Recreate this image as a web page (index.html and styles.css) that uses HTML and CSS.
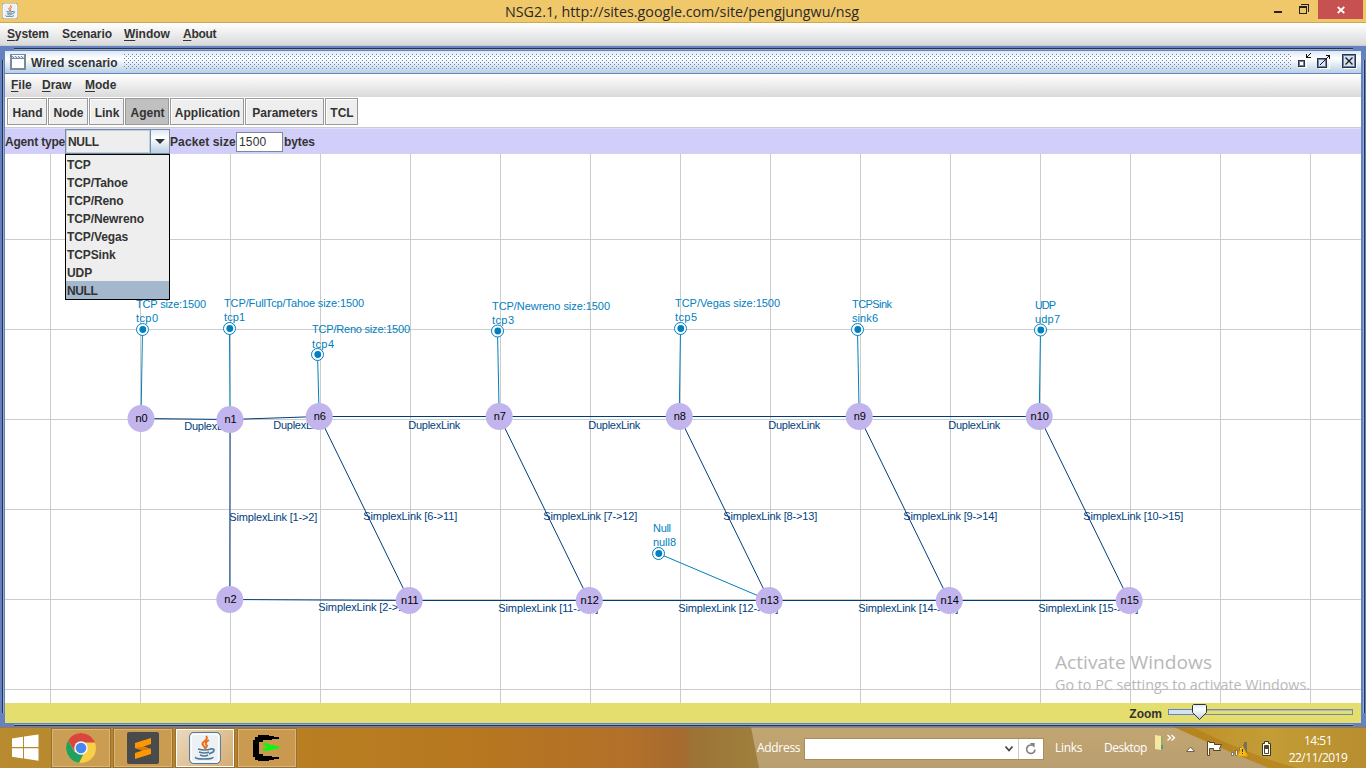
FILE: index.html
```html
<!DOCTYPE html>
<html lang="en">
<head>
<meta charset="utf-8">
<title>NSG2.1</title>
<link rel="stylesheet" href="styles.css">
</head>
<body>
<header class="titlebar">
  <svg class="app-icon" width="16" height="16" viewBox="0 0 32 32"><use href="#java"/></svg>
  <svg class="title-text" width="376" height="22"><text x="11" y="17" textLength="354" lengthAdjust="spacingAndGlyphs">NSG2.1, http://sites.google.com/site/pengjungwu/nsg</text></svg>
  <div class="window-controls">
    <svg width="48" height="19" viewBox="1270 0 48 19" shape-rendering="crispEdges"><path d="M1274 11h8v2h-8z" fill="#222"/><path d="M1299.5 7.500h7v6h-7zM1299 6.500h8M1301 4.500h7.500v7" fill="none" stroke="#222"/></svg>
    <div class="close"><svg width="8" height="8" viewBox="0 0 8 8"><path d="M.7 1l6.600 6M7.300 1L.7 7" stroke="#fff" stroke-width="1.700"/></svg></div>
  </div>
</header>
<nav class="menubar main-menu">
  <span class="m-system"><u>S</u>ystem</span><span class="m-scenario">S<u>c</u>enario</span><span class="m-window"><u>W</u>indow</span><span><u>A</u>bout</span>
</nav>
<main class="desktop">
  <section class="frame">
    <div class="frame-title">
      <svg width="16" height="16" viewBox="0 0 16 16" shape-rendering="crispEdges"><rect x=".5" y=".5" width="15" height="15" rx="1" fill="#fff" stroke="#7a8a99"/><rect x="1.500" y="1.500" width="13" height="3" fill="#dce7f3"/><path d="M2 2.500h12M3 3.500h12" stroke="#6382bf" stroke-dasharray="1 2"/><path d="M1 4.500h14M1.500 1v14M14.500 1v14M1 14.500h14" stroke="#7a8a99"/></svg>
      <span class="frame-name">Wired scenario</span>
      <svg class="grip" width="1168" height="16" shape-rendering="crispEdges"><defs><pattern id="dots" width="4" height="4" patternUnits="userSpaceOnUse"><path d="M0 0h1v1H0zM2 2h1v1H2z" fill="#6382bf"/></pattern></defs><rect width="1168" height="16" fill="url(#dots)"/></svg>
      <svg class="frame-buttons" width="60" height="18" viewBox="1297 53 60 18" shape-rendering="crispEdges">
        <path d="M1299 67.500h7v-7M1319 68.500h10v-10M1344 68.500h12.500v-14" fill="none" stroke="#fff"/>
        <rect x="1298.500" y="60.500" width="6" height="6" fill="#b8cfe5" stroke="#333"/><rect x="1299.500" y="61.500" width="4" height="4" fill="#fff" stroke="#6382bf"/><path d="M1307 57.500h4M1306.500 54v4M1307 57l4-4" stroke="#111" fill="none"/>
        <rect x="1317.500" y="58.500" width="9" height="9" fill="#dce8f4" stroke="#333"/><rect x="1318.500" y="59.500" width="7" height="7" fill="none" stroke="#6382bf"/><path d="M1320 65l9-9M1326 55.500h4M1329.500 55v4" stroke="#111"/>
        <rect x="1342.500" y="54.500" width="13" height="13" fill="#d5e3f1" stroke="#333"/><rect x="1343.500" y="55.500" width="11" height="11" fill="none" stroke="#6382bf"/><path d="M1345.500 57.500l7 7M1352.500 57.500l-7 7" stroke="#222" stroke-width="1.400" shape-rendering="auto"/>
      </svg>
    </div>
    <nav class="menubar frame-menu"><span class="m-file"><u>F</u>ile</span><span class="m-draw"><u>D</u>raw</span><span><u>M</u>ode</span></nav>
    <div class="toolbar">
      <button class="w-hand">Hand</button><button class="w-node">Node</button><button class="w-link">Link</button><button class="w-agent active">Agent</button><button class="w-app">Application</button><button class="w-param">Parameters</button><button class="w-tcl">TCL</button>
    </div>
    <div class="options">
      <span class="agent-label">Agent type</span>
      <div class="combo"><span class="combo-value">NULL</span><span class="combo-arrow"><i></i></span>
        <ul class="popup"><li>TCP</li><li>TCP/Tahoe</li><li>TCP/Reno</li><li>TCP/Newreno</li><li>TCP/Vegas</li><li>TCPSink</li><li>UDP</li><li class="selected">NULL</li></ul>
      </div>
      <span class="packet-label">Packet size</span><span class="field">1500</span><span class="bytes">bytes</span>
    </div>
    <div class="canvas">
      <svg id="diagram" width="1356" height="549" viewBox="5 154 1356 549"></svg>
      <div class="watermark"><svg width="270" height="50" viewBox="1050 648 270 50"><text x="1055" y="669" font-size="19" textLength="157" lengthAdjust="spacingAndGlyphs">Activate Windows</text><text x="1055" y="690" font-size="14" textLength="255" lengthAdjust="spacingAndGlyphs">Go to PC settings to activate Windows.</text></svg></div>
    </div>
    <div class="zoombar"><span>Zoom</span>
      <svg width="187" height="18" viewBox="1167 703 187 18"><rect x="1168.500" y="709.500" width="184" height="5" fill="#e3de6d" stroke="#7a8a99"/><path d="M1169 710.500h183" stroke="#a3b8cc"/><rect x="1168.500" y="709.500" width="30" height="5" fill="#d4e3f1" stroke="#6382bf"/><path d="M1193.500 704.500h12l1 1v7l-7 7-7-7v-7z" fill="url(#thumb)" stroke="#333"/><defs><linearGradient id="thumb" x2="0" y2="1"><stop stop-color="#dce8f4"/><stop offset=".3" stop-color="#fff"/><stop offset="1" stop-color="#b8cfe5"/></linearGradient></defs></svg>
    </div>
  </section>
</main>
<footer class="taskbar">
  <svg class="wallpaper" width="1366" height="41" viewBox="0 0 1366 41" preserveAspectRatio="none"><defs><linearGradient id="wood"><stop stop-color="#b88b30"/><stop offset=".3" stop-color="#b98124"/><stop offset=".6" stop-color="#b7781f"/><stop offset=".83" stop-color="#b27029"/><stop offset=".9" stop-color="#a66b31"/><stop offset=".91" stop-color="#9c7335"/><stop offset="1" stop-color="#9f803d"/></linearGradient><linearGradient id="gold"><stop stop-color="#bd8f28"/><stop offset=".5" stop-color="#c49d36"/><stop offset="1" stop-color="#b78d2f"/></linearGradient><linearGradient id="tan" x2="0" y2="1"><stop stop-color="#c2a671"/><stop offset="1" stop-color="#b99e70"/></linearGradient></defs><rect width="760" height="41" fill="url(#wood)"/><path d="M751 0h430q75 34 95 41H759z" fill="url(#tan)"/><path d="M1174 0h192v41h-97q-55-23-95-41z" fill="url(#gold)"/><path d="M1174 0h18q60 29 105 41h-28q-50-20-95-41z" fill="#b27c18" opacity=".6"/><path d="M0 .5h1366" stroke="#866b3d" opacity=".5"/></svg>
  <svg class="start" width="52" height="40" viewBox="0 728 52 40"><path d="M12 738.500l11-1.800v10.300H12zM24 736.500l14.500-2v12.500H24zM12 748.200h11v10.300l-11-1.700zM24 748.200h14.500v12.500l-14.500-2.200z" fill="#fff"/></svg>
  <div class="task"><svg width="32" height="32" viewBox="0 0 32 32"><circle cx="16" cy="16" r="15" fill="#f9cf48"/><path d="M3 8.500A15 15 0 0 1 29 8.500L30 10.500H16L9.500 19z" fill="#da453c"/><path d="M3 8.500l6.600 11.200 8.500 3.100-4 8A15 15 0 0 1 3 8.500z" fill="#23a15c"/><circle cx="16" cy="16" r="6.800" fill="#f6f6f6"/><circle cx="16" cy="16" r="5.300" fill="#4688ef"/></svg></div>
  <div class="task"><svg width="32" height="32" viewBox="0 0 32 32"><rect width="32" height="32" rx="2" fill="#494a4b"/><path d="M8 11L24 6v6l-7.500 2.500L24 17v5L8 27v-6l7.500-2.500L8 16z" fill="#ff9800"/><path d="M8 16l8.500-1.500L24 17l-8.500 1.500z" fill="#d77d0a"/></svg></div>
  <div class="task current"><svg width="32" height="32" viewBox="0 0 32 32"><g id="java"><rect x=".7" y=".7" width="30.600" height="30.600" rx="4" fill="#edf1f4" stroke="#52799b" stroke-width="1.300"/><rect x="2" y="2" width="28" height="28" rx="3" fill="none" stroke="#fff" stroke-width="1.500"/><path d="M17 4c4 4-6 6-3 9l2 3M20 8c-5 3-3 4-2 6l-2 3" fill="none" stroke="#e86f19" stroke-width="2"/><path d="M9 17q7 2 13 0M10 20q6 2 10 0M11 23q5 2 8 0M21 17q6-1 3 3l-4 2M7 25q-2 2 8 2 9 0 9-2" fill="none" stroke="#4d7899" stroke-width="1.700"/></g></svg></div>
  <div class="task"><svg width="32" height="32" viewBox="0 0 32 32" shape-rendering="crispEdges"><path d="M7 3h11v1h5v1h5v2h-7v1h-9v2H8v12h4v2h9v1h7v2h-5v1h-5v1H7v-1H4v-3H2V8h2V5h3z" fill="#000"/><path d="M12 11h4v1h3v1h5v1h4v3h-6v1h-4v1h-6v-2h2v-1h2v-1h-2v-2h-2z" fill="#0cf810"/></svg></div>
  <span class="address-label">Address</span>
  <div class="address-box"><svg width="10" height="8" viewBox="0 0 10 8"><path d="M1.500 1.500L5 5.500l3.500-4" fill="none" stroke="#444" stroke-width="1.800"/></svg><span class="refresh"><svg width="12" height="12" viewBox="0 0 12 12"><path d="M7.200 2.300A4.200 4.200 0 1 0 10 6.500" fill="none" stroke="#808080" stroke-width="1.600"/><path d="M5 0h4.600v4.600L8 3.500z" fill="#808080"/></svg></span></div>
  <span class="links">Links</span><span class="desk">Desktop</span>
  <svg class="tray" width="125" height="40" viewBox="1150 728 125 40"><path d="M1155 735l6 1v14l-6-1z" fill="#f6e7a1"/><path d="M1161 736h2v14h-2z" fill="#a3a865"/><path d="M1161 745h2v4h-2z" fill="#469b94"/><path d="M1167.500 735l3 2.700-3 2.700M1171.500 735l3 2.700-3 2.700" fill="none" stroke="#fff" stroke-width="1.300"/><path d="M1186.500 751.500l4-4.500 4 4.500z" fill="#fff" stroke="#74654a"/><path d="M1207.500 741.500h2v1h5v2h7l-2 4 1 2h-7v-2h-4v7h-2z" fill="#fff" stroke="#574825"/><path d="M1231.500 752.500h2v3h-2zM1235.500 750.500h2v5h-2zM1239.500 747.500h2v8h-2zM1243.500 744.500h2v11h-2z" fill="#fff" stroke="#625635" stroke-width=".7"/><path d="M1244 742h3v11h-3z" fill="#77705b"/><path d="M1242.500 746l5 10h-10z" fill="#fcbd10" stroke="#e3a307"/><path d="M1242 749h1v3h-1zm0 4h1v1h-1z" fill="#333"/><path d="M1264.500 741.500h4v2h2v12h-8v-12h2z" fill="#fff" stroke="#3e361f"/><path d="M1264.500 745.500h4v8h-4z" fill="#fff" stroke="#4d4327"/><path d="M1265 746h3v3h-3z" fill="#4d4327"/></svg>
  <div class="clock"><span>14:51</span><span>22/11/2019</span></div>
</footer>
<script src="diagram.js"></script>
</body>
</html>
```
FILE: styles.css
```css
* { box-sizing: border-box; }
body { margin: 0; width: 1366px; height: 768px; overflow: hidden; display: flex; flex-direction: column; background: #6382bf; font: bold 12px "Liberation Sans", Arial, sans-serif; color: #333; }
svg { display: block; flex: none; }
.titlebar { height: 23px; flex: none; background: #f0c869; border-bottom: 1px solid #cba852; display: flex; align-items: flex-start; }
.app-icon { margin: 3px 0 0 2px; }
.title-text { margin-left: 476px; overflow: visible; font: 14.5px "Open Sans", "Noto Sans", sans-serif; fill: #292929; }
.window-controls { display: flex; margin-left: 400px; }
.close { width: 45px; height: 19px; background: #c75050; display: flex; align-items: center; justify-content: center; }
.menubar { display: flex; align-items: center; background: linear-gradient(#fff, #dadada); flex: none; }
.menubar u { text-underline-offset: 2px; text-decoration-thickness: 1px; }
.main-menu { height: 23px; padding: 0 0 1px 7px; border-bottom: 1px solid #ccc; }
.m-system { width: 55px; letter-spacing: -.15px; }
.m-scenario { width: 62px; letter-spacing: -.1px; }
.m-window { width: 59px; }
.main-menu span:last-child { letter-spacing: -.3px; }
.desktop { height: 681px; flex: none; background: #6382bf; padding: 4px 5px 5px; border-top: 1px solid #6382bf; position: relative; }
.desktop::before { content: ""; position: absolute; inset: 1px 1px 1px 2px; border: 1px solid #28334a; outline: 1px solid #93acd3; outline-offset: -2px; clip-path: polygon(12px 0, 1351px 0, 1351px 12px, 100% 12px, 100% 665px, 1351px 665px, 1351px 100%, 12px 100%, 12px 665px, 0 665px, 0 12px, 12px 12px); }
.frame { position: relative; width: 1356px; height: 672px; }
.frame-title { height: 23px; display: flex; align-items: center; padding: 0 4px 1px 5px; background: linear-gradient(#dce8f4, #fff 35%, #b8cfe5); border-bottom: 1px solid #6382bf; }
.frame-name { width: 88px; margin: 2px 0 0 5px; letter-spacing: .05px; }
.grip { margin-left: 5px; }
.frame-buttons { margin-left: 5px; }
.frame-menu { height: 23px; padding: 0 0 2px 6px; }
.m-file { width: 31px; }
.m-draw { width: 43px; }
.toolbar { height: 31px; background: #fff; display: flex; gap: 1px; padding: 1px 2px 2px; border-bottom: 1px solid #ccc; }
.toolbar button { height: 27px; padding: 2px 0 0 1px; background: #eee; border: 1px solid #999; box-shadow: inset 1px 1px #fff; font: inherit; color: inherit; text-align: center; }
.toolbar .active { background: #c0c0c0; box-shadow: none; }
.w-hand { width: 40px; } .w-node { width: 40px; } .w-link { width: 35px; } .w-agent { width: 44px; } .w-app { width: 74px; } .w-param { width: 79px; } .w-tcl { width: 33px; }
.options { height: 26px; background: #d1cef9; border-top: 1px solid #dedcf8; display: flex; align-items: center; }
.agent-label { width: 60px; white-space: nowrap; letter-spacing: -.2px; }
.combo { position: relative; width: 105px; height: 25px; display: flex; border: 1px solid #7a8a99; background: #eee; z-index: 2; }
.combo-value { width: 85px; line-height: 22px; padding-left: 1px; border: 1px solid #b8cfe5; letter-spacing: -.3px; }
.combo-arrow { width: 19px; border-left: 1px solid #7a8a99; background: linear-gradient(#dce8f4, #fff 35%, #b8cfe5); display: flex; align-items: center; justify-content: center; }
.combo-arrow i { border: 5px solid transparent; border-top-color: #333; border-bottom: 0; }
.popup { position: absolute; left: -1px; top: 24px; width: 105px; height: 146px; margin: 0; padding: 0; list-style: none; border: 1px solid #000; background: #eee; letter-spacing: -.1px; }
.popup li { height: 18px; line-height: 20px; padding-left: 1px; }
.popup .selected { background: #a3b8cc; letter-spacing: -.4px; }
.packet-label { width: 66px; white-space: nowrap; letter-spacing: .1px; }
.field { width: 47px; height: 20px; margin-right: 1px; background: #fff; border: 1px solid #7a8a99; font-weight: normal; line-height: 19px; padding-left: 2px; letter-spacing: .2px; }
.bytes { letter-spacing: -.1px; }
.canvas { height: 549px; background: #fff; position: relative; }
#diagram { font: 11px "Liberation Sans", Arial, sans-serif; }
.watermark { position: absolute; left: 1045px; top: 494px; }
.watermark svg { overflow: visible; }
.watermark text { font-family: "Open Sans", "Noto Sans", sans-serif; font-weight: 400; fill: #b8b8b8; }
.zoombar { height: 20px; background: #e3de6d; display: flex; justify-content: flex-end; align-items: center; gap: 5px; padding-right: 7px; }
.zoombar span { padding-top: 1px; }
.zoombar svg { margin-bottom: 2px; }
.taskbar { height: 41px; flex: none; position: relative; display: flex; align-items: flex-start; font: 12px "Open Sans", "Noto Sans", sans-serif; color: #fff; }
.wallpaper { position: absolute; inset: 0; z-index: -1; }
.start { margin-top: 1px; }
.task { width: 58px; height: 38px; margin: 2px 4px 0 0; border: 1px solid #d7b779; outline: 1px solid #987034; background: rgba(219, 180, 123, .5); display: flex; justify-content: center; align-items: center; }
.task.current { background: linear-gradient(135deg, #ead9bf, #d5ad73); border: 1px solid #fff; }
.address-label { width: 47px; margin: 12px 0 0 457px; letter-spacing: -.3px; }
.address-box { width: 240px; height: 22px; margin-top: 11px; background: #fff; border: 1px solid #a88d5d; display: flex; justify-content: flex-end; align-items: center; }
.refresh { width: 25px; height: 20px; margin-left: 4px; border-left: 1px solid #ccc; display: flex; align-items: center; justify-content: center; }
.links { width: 49px; margin: 12px 0 0 11px; letter-spacing: -.3px; }
.desk { width: 46px; margin-top: 12px; letter-spacing: -.5px; }
.tray { margin-top: 1px; }
.clock { width: 86px; display: flex; flex-direction: column; align-items: center; line-height: 17px; margin-top: 5px; letter-spacing: -.5px; }
```
FILE: diagram.js
```js
const svg = document.getElementById('diagram');
const NS = 'http://www.w3.org/2000/svg';

function add(tag, attrs, text) {
  const el = document.createElementNS(NS, tag);
  for (const key in attrs) el.setAttribute(key, attrs[key]);
  if (text) el.textContent = text;
  svg.appendChild(el);
}
function line(x1, y1, x2, y2, stroke, width = 1) {
  add('line', { x1, y1, x2, y2, stroke, 'stroke-width': width });
}
function label(text, x, y, w, fill) {
  add('text', { x, y, fill, textLength: w }, text);
}

const NAVY = '#003d7d', BLUE = '#0080c0';

for (let x = 50.5; x < 1361; x += 90) line(x, 154, x, 703, '#ccc');
for (let y = 239.5; y < 703; y += 90) line(5, y, 1361, y, '#ccc');

const nodes = {
  n0: [141, 418.5], n1: [230, 419.5], n6: [319.2, 416.5], n7: [499.2, 416.5],
  n8: [679.2, 416.5], n9: [859.2, 416.5], n10: [1039.2, 416.5],
  n2: [229.8, 599.5], n11: [409.2, 600.5], n12: [589.2, 600.5],
  n13: [769.2, 600.5], n14: [949.2, 600.5], n15: [1129.2, 600.5]
};
const links = ['n0 n1', 'n1 n6', 'n6 n7', 'n7 n8', 'n8 n9', 'n9 n10', 'n1 n2', 'n2 n11',
  'n11 n12', 'n12 n13', 'n13 n14', 'n14 n15', 'n6 n11', 'n7 n12', 'n8 n13', 'n9 n14', 'n10 n15'];
for (const link of links) {
  const [a, b] = link.split(' ');
  line(...nodes[a], ...nodes[b], NAVY);
}

const labels = [
  ['DuplexLink', 184, 430, 52], ['DuplexLink', 273, 429, 52], ['DuplexLink', 408, 429, 52],
  ['DuplexLink', 588, 429, 52], ['DuplexLink', 768, 429, 52], ['DuplexLink', 948, 429, 52],
  ['SimplexLink [1->2]', 229, 521, 88], ['SimplexLink [6->11]', 363, 520, 94],
  ['SimplexLink [7->12]', 543, 520, 94], ['SimplexLink [8->13]', 723, 520, 94],
  ['SimplexLink [9->14]', 903, 520, 94], ['SimplexLink [10->15]', 1083, 520, 100],
  ['SimplexLink [2->11]', 318, 611, 94], ['SimplexLink [11->12]', 498, 612, 100],
  ['SimplexLink [12->13]', 678, 612, 100], ['SimplexLink [14->14]', 858, 612, 100],
  ['SimplexLink [15->15]', 1038, 612, 100]
];
for (const [text, x, y, w] of labels) label(text, x + 0.3, y, w, NAVY);

const agents = [
  ['TCP size:1500', 136, 308, 70, 'tcp0', 136, 322, 22, 142.5, 329.5, 'n0'],
  ['TCP/FullTcp/Tahoe size:1500', 224, 307, 140, 'tcp1', 224, 321, 21, 229.5, 328.5, 'n1'],
  ['TCP/Reno size:1500', 312, 333, 98, 'tcp4', 312, 348, 22, 317.5, 354.5, 'n6'],
  ['TCP/Newreno size:1500', 492, 310, 118, 'tcp3', 492, 324, 22, 497.5, 331, 'n7'],
  ['TCP/Vegas size:1500', 675, 307, 105, 'tcp5', 675, 321, 22, 680.5, 328.5, 'n8'],
  ['TCPSink', 852, 308, 40, 'sink6', 852, 322, 26, 857.5, 329.5, 'n9'],
  ['UDP', 1035, 309, 21, 'udp7', 1035, 323, 25, 1040.5, 330, 'n10'],
  ['Null', 653, 532, 18, 'null8', 653, 546, 23, 658.5, 553.5, 'n13']
];
for (const [type, tx, ty, tw, name, nx, ny, nw, cx, cy, node] of agents) {
  line(cx, cy, ...nodes[node], BLUE);
  add('circle', { cx, cy, r: 6, fill: '#fff', stroke: BLUE });
  add('circle', { cx: cx + 0.3, cy, r: 3.4, fill: BLUE });
  label(type, tx, ty, tw, BLUE);
  label(name, nx, ny, nw, BLUE);
}
for (const name in nodes) {
  const [cx, cy] = nodes[name];
  add('circle', { cx, cy, r: 13.5, fill: '#c2b5ed' });
  add('text', { x: cx + 0.6, y: cy + 3.5, 'text-anchor': 'middle', fill: '#000' }, name);
}
```
